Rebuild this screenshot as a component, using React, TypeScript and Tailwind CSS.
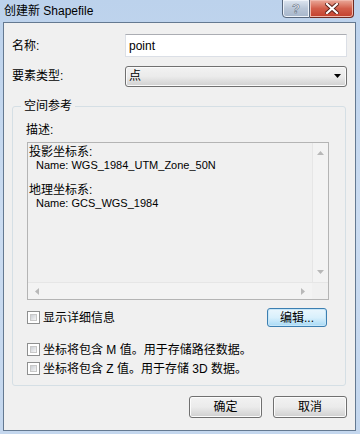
import React from 'react';

const font = { fontFamily: '"Liberation Sans", "Noto Sans CJK SC", sans-serif' };

function Checkbox({ label }: { label: string }) {
  return (
    <div className="flex items-center h-[13px]">
      <div className="w-[13px] h-[13px] border border-[#8e8f8f] bg-white p-[2px]">
        <div className="w-full h-full bg-gradient-to-br from-[#cbcfd5] to-[#f6f6f6] border border-[#c8c8c8]" />
      </div>
      <span className="ml-[3px] text-[12px] leading-[14px] text-black whitespace-nowrap">{label}</span>
    </div>
  );
}

function Button({ children, primary = false, className = '' }: { children: React.ReactNode; primary?: boolean; className?: string }) {
  return (
    <div
      className={
        'flex items-center justify-center rounded-[3px] border text-[12px] text-black ' +
        (primary
          ? 'border-[#3c7fb1] bg-gradient-to-b from-[#eaf6fd] via-[#d9f0fc] to-[#a7d9f5] shadow-[inset_0_0_0_1px_#c7e6f8] '
          : 'border-[#707070] bg-gradient-to-b from-[#f2f2f2] via-[#ebebeb] to-[#cfcfcf] shadow-[inset_0_0_0_1px_#fcfcfc] ') +
        className
      }
    >
      {children}
    </div>
  );
}

function Tri({ dir }: { dir: 'up' | 'down' | 'left' | 'right' }) {
  const pts = {
    up: '0,4 3.5,0 7,4',
    down: '0,0 7,0 3.5,4',
    left: '4,0 4,7 0,3.5',
    right: '0,0 0,7 4,3.5',
  }[dir];
  const vert = dir === 'up' || dir === 'down';
  return (
    <svg width={vert ? 7 : 4} height={vert ? 4 : 7}>
      <polygon points={pts} fill="#b8b8b8" />
    </svg>
  );
}

export default function App() {
  return (
    <div className="w-[360px] h-[434px] flex flex-col bg-gradient-to-b from-[#bcd2ec] via-[#cbdcf1] to-[#c4d7ee] overflow-hidden" style={font}>
      {/* title bar */}
      <div className="h-[22px] flex items-start shrink-0">
        <div className="pl-[4px] pt-[4px] text-[12px] leading-[14px] text-black">创建新 Shapefile</div>
        <div className="ml-auto mr-[6px] flex h-[19px] -mt-[1px]">
          <div className="w-[28px] h-full rounded-bl-[4px] border border-[#57677c] bg-gradient-to-b from-[#dfe7f1] via-[#b9c6d7] to-[#a6b6cb] flex items-center justify-center shadow-[inset_0_0_0_1px_#eef3f9]">
            <span className="text-[13px] font-bold leading-none text-white" style={{ WebkitTextStroke: '0.6px #5a6a80' }}>?</span>
          </div>
          <div className="w-[44px] h-full rounded-br-[4px] border border-l-0 border-[#6e2a22] bg-gradient-to-b from-[#e9a99a] via-[#d25e4a] to-[#c23f2c] flex items-center justify-center shadow-[inset_0_0_0_1px_#f0b8ab]">
            <svg width="14" height="11" viewBox="0 0 14 11">
              <path d="M2 1 L12 10 M12 1 L2 10" stroke="#5a2018" strokeWidth="4" strokeLinecap="square" />
              <path d="M2 1 L12 10 M12 1 L2 10" stroke="#ffffff" strokeWidth="2.2" strokeLinecap="square" />
            </svg>
          </div>
        </div>
      </div>

      {/* client area */}
      <div className="ml-[3px] mr-[4px] h-[409px] border border-[#647991] bg-[#f0f0f0] flex flex-col">
        {/* name */}
        <div className="flex items-center mt-[11px] h-[23px]">
          <div className="w-[121px] pl-[8px] text-[12px] text-black">名称:</div>
          <div className="w-[222px] h-[23px] border border-[#dbdfe6] border-t-[#abadb3] bg-white flex items-center pl-[3px] text-[12px] text-black">
            point
          </div>
        </div>
        {/* type */}
        <div className="flex items-center mt-[9px] h-[20px]">
          <div className="w-[121px] pl-[8px] text-[12px] text-black">要素类型:</div>
          <div className="w-[222px] h-[21px] rounded-[3px] border border-[#707070] bg-gradient-to-b from-[#f2f2f2] via-[#ebebeb] to-[#d0d0d0] flex items-center pl-[3px] pr-[5px] text-[12px] text-black shadow-[inset_0_0_0_1px_#fafafa]">
            <span>点</span>
            <svg width="7" height="4" className="ml-auto">
              <polygon points="0,0 7,0 3.5,4" fill="#000" />
            </svg>
          </div>
        </div>

        {/* group box */}
        <div className="relative ml-[8px] mt-[20px] w-[334px] h-[280px] rounded-[3px] border border-[#d5dfe5] flex flex-col">
          <div className="absolute left-[8px] -top-[8px] px-[3px] bg-[#f0f0f0] text-[12px] leading-[14px] text-black">空间参考</div>
          <div className="mt-[16px] pl-[13px] text-[12px] leading-[14px] text-black">描述:</div>
          {/* description box */}
          <div className="ml-[14px] mt-[5px] w-[302px] h-[158px] border border-[#b4b4b4] bg-[#f0f0f0] flex flex-col">
            <div className="flex flex-1 min-h-0">
              <div className="flex-1 pl-[1px] pt-[3px] text-black">
                <div className="text-[12px] leading-[13px]">投影坐标系:</div>
                <div className="pl-[7px] text-[11px] leading-[13px]">Name: WGS_1984_UTM_Zone_50N</div>
                <div className="h-[12px]" />
                <div className="text-[12px] leading-[13px]">地理坐标系:</div>
                <div className="pl-[7px] text-[11px] leading-[13px]">Name: GCS_WGS_1984</div>
              </div>
              <div className="w-[16px] bg-[#f3f3f3] border-l border-[#e6e6e6] flex flex-col items-center justify-between py-[8px]">
                <Tri dir="up" />
                <Tri dir="down" />
              </div>
            </div>
            <div className="h-[17px] flex border-t border-[#e6e6e6]">
              <div className="flex-1 bg-[#f3f3f3] flex items-center justify-between px-[7px]">
                <Tri dir="left" />
                <Tri dir="right" />
              </div>
              <div className="w-[16px] bg-[#f0f0f0]" />
            </div>
          </div>
          {/* show details + edit */}
          <div className="mt-[8px] ml-[14px] mr-[18px] flex items-center h-[19px]">
            <Checkbox label="显示详细信息" />
            <Button primary className="ml-auto w-[60px] h-[19px]">编辑...</Button>
          </div>
          <div className="mt-[16px] ml-[14px]">
            <Checkbox label="坐标将包含 M 值。用于存储路径数据。" />
          </div>
          <div className="mt-[6px] ml-[14px]">
            <Checkbox label="坐标将包含 Z 值。用于存储 3D 数据。" />
          </div>
        </div>

        {/* bottom buttons */}
        <div className="mt-[10px] flex justify-end pr-[8px] gap-[11px]">
          <Button className="w-[73px] h-[22px]">确定</Button>
          <Button className="w-[74px] h-[22px]">取消</Button>
        </div>
      </div>
    </div>
  );
}
